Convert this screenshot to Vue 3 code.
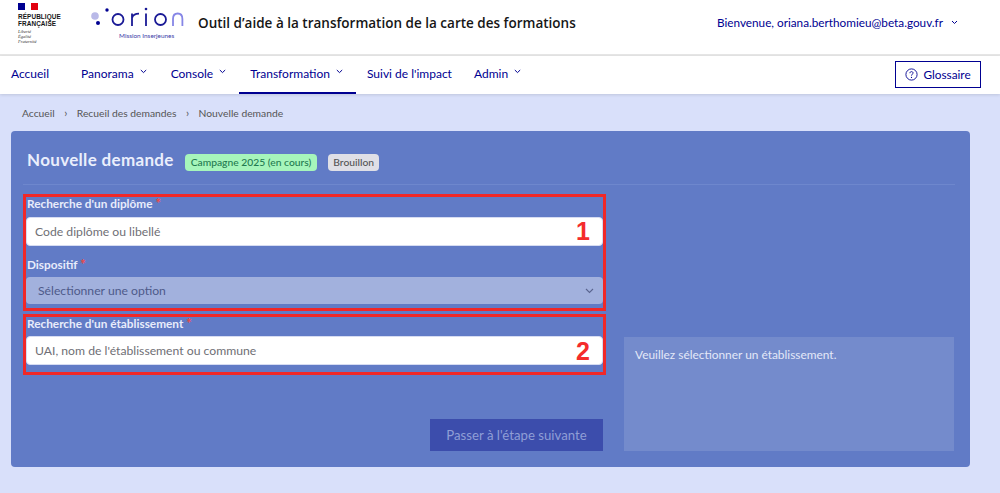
<script setup>
const navItems = [
  { label: 'Accueil' },
  { label: 'Panorama', chevron: true },
  { label: 'Console', chevron: true },
  { label: 'Transformation', chevron: true, active: true },
  { label: "Suivi de l'impact" },
  { label: 'Admin', chevron: true },
]
</script>

<template>
  <div class="page">
    <header class="top">
      <div class="rf">
        <div class="flag"><i class="b"></i><i class="w"></i><i class="r"></i></div>
        <div class="rf-name">RÉPUBLIQUE<br />FRANÇAISE</div>
        <div class="rf-motto">Liberté<br />Égalité<br />Fraternité</div>
      </div>
      <div class="orion">
        <svg class="orion-mark" width="104" height="28" viewBox="0 0 104 28">
          <circle cx="5" cy="9" r="3.800" fill="#b9b9e8" />
          <circle cx="8" cy="16" r="2" fill="#000091" />
          <circle cx="17" cy="3" r="1.700" fill="#000091" />
          <circle cx="28" cy="12.500" r="5.500" fill="none" stroke="#1a1a96" stroke-width="1.800" />
          <path d="M42 19V6.500M42 11c.8-2.800 3-4.300 7-4.300" fill="none" stroke="#1a1a96" stroke-width="1.800" />
          <path d="M56 19V6.500" fill="none" stroke="#1a1a96" stroke-width="1.800" />
          <circle cx="56" cy="2" r="1.300" fill="#1a1a96" />
          <circle cx="70.500" cy="12.500" r="5.500" fill="none" stroke="#1a1a96" stroke-width="1.800" />
          <path d="M83 19v-7c0-3.500 2-5.500 4.700-5.500s4.700 2 4.700 5.500v7" fill="none" stroke="#8686e6" stroke-width="1.800" />
        </svg>
        <div class="orion-sub">Mission Inserjeunes</div>
      </div>
      <div class="app-title">Outil d’aide à la transformation de la carte des formations</div>
      <div class="user">
        <span>Bienvenue, oriana.berthomieu@beta.gouv.fr</span>
        <svg width="7" height="5" viewBox="0 0 7 5"><path d="M1 1l2.500 2.500L6 1" fill="none" stroke="#000091" stroke-width="1" /></svg>
      </div>
    </header>

    <nav class="nav">
      <a
        v-for="item in navItems"
        :key="item.label"
        class="nav-item"
        :class="{ active: item.active }"
      >
        {{ item.label }}
        <svg v-if="item.chevron" width="7" height="5" viewBox="0 0 7 5"><path d="M.8 1l2.700 2.600L6.200 1" fill="none" stroke="#000091" stroke-width="1" /></svg>
      </a>
      <button class="glossaire">
        <svg width="13" height="13" viewBox="0 0 13 13">
          <circle cx="6.500" cy="6.500" r="5.600" fill="none" stroke="#000091" stroke-width=".9" />
          <path d="M4.900 5.200c0-1 .7-1.600 1.600-1.600s1.600.6 1.600 1.400c0 1.200-1.600 1.200-1.600 2.600" fill="none" stroke="#000091" stroke-width=".9" />
          <circle cx="6.500" cy="9.400" r=".6" fill="#000091" />
        </svg>
        Glossaire
      </button>
    </nav>

    <main class="main">
      <div class="crumbs">
        <span>Accueil</span><b>›</b><span>Recueil des demandes</span><b>›</b><span>Nouvelle demande</span>
      </div>

      <section class="card">
        <div class="card-head">
          <h1>Nouvelle demande</h1>
          <span class="tag green">Campagne 2025 (en cours)</span>
          <span class="tag grey">Brouillon</span>
        </div>

        <div class="grid">
          <div class="left">
            <div class="annot first">
              <label class="lbl">Recherche d'un diplôme <em>*</em></label>
              <div class="input">Code diplôme ou libellé</div>
              <label class="lbl second">Dispositif <em>*</em></label>
              <div class="select">
                <span>Sélectionner une option</span>
                <svg width="9" height="6" viewBox="0 0 9 6"><path d="M1 1l3.500 3.500L8 1" fill="none" stroke="#5a658f" stroke-width="1.100" /></svg>
              </div>
              <span class="num">1</span>
            </div>
            <div class="annot two">
              <label class="lbl">Recherche d'un établissement <em>*</em></label>
              <div class="input">UAI, nom de l'établissement ou commune</div>
              <span class="num">2</span>
            </div>
            <div class="actions">
              <button class="next">Passer à l'étape suivante</button>
            </div>
          </div>
          <aside class="info">Veuillez sélectionner un établissement.</aside>
        </div>
      </section>
    </main>
  </div>
</template>

<style>
html, body { margin: 0; background: #d9e0fa; }
</style>

<style scoped>
.page {
  width: 1000px;
  height: 493px;
  overflow: hidden;
  background: #d9e0fa;
  font-family: Lato, "Noto Sans", sans-serif;
}
.top {
  height: 54px;
  background: #fff;
  border-bottom: 2px solid #e6e6e6;
  display: flex;
  align-items: flex-start;
}
.rf { margin-left: 18px; width: 70px; padding-top: 3px; }
.flag { display: flex; width: 20px; height: 7px; }
.flag i { flex: 1; }
.flag .b { background: #000091; }
.flag .w { background: #fff; }
.flag .r { background: #e1000f; }
.rf-name {
  font-size: 6.400px;
  line-height: 7px;
  font-weight: 700;
  color: #161616;
  margin-top: 3px;
  font-family: "Liberation Sans", sans-serif;
  letter-spacing: .1px;
}
.rf-motto {
  font-family: "Liberation Serif", serif;
  font-style: italic;
  font-size: 4.500px;
  line-height: 5px;
  color: #333;
  margin-top: 2px;
}
.orion { width: 108px; margin-left: 2px; padding-top: 7px; }
.orion-mark { display: block; }
.orion-sub {
  font-size: 6.400px;
  line-height: 7px;
  color: #3a3aa8;
  margin-top: -3px;
  margin-left: 29px;
  white-space: nowrap;
}
.app-title {
  font-family: "Open Sans", sans-serif;
  font-size: 13.500px;
  font-weight: 600;
  line-height: 20px;
  color: #161616;
  padding-top: 13px;
}
.user {
  margin-left: auto;
  margin-right: 42px;
  padding-top: 14px;
  font-size: 11.750px;
  line-height: 17px;
  color: #000091;
  display: flex;
  align-items: center;
  gap: 8px;
}
.nav {
  height: 38px;
  background: #fff;
  display: flex;
  align-items: stretch;
  box-shadow: 0 1px 3px rgba(0, 0, 0, .12);
  position: relative;
  padding-left: 1px;
  font-size: 12px;
  color: #000091;
}
.nav-item {
  display: flex;
  align-items: center;
  gap: 6px;
  padding: 0 10px 2px;
  color: #000091;
  box-sizing: border-box;
  border-bottom: 2px solid transparent;
  height: 38px;
  white-space: nowrap;
}
.nav-item svg { margin-top: -4px; }
.nav-item.active { border-bottom-color: #000091; padding: 0 13px 2px 11px; margin-right: 1px; }
.nav-item:nth-child(1) { margin-right: 12px; }
.nav-item:nth-child(2) { margin-right: 4px; }
.nav-item:nth-child(3) { margin-right: 3px; }
.nav-item:nth-child(5) { margin-right: 2px; }
.glossaire {
  margin: 5px 19px 6px auto;
  width: 86px;
  height: 27px;
  border: 1px solid #000091;
  background: #fff;
  color: #000091;
  font: inherit;
  font-size: 11.800px;
  display: flex;
  align-items: center;
  justify-content: center;
  gap: 5px;
  padding: 0;
}
.main { padding: 0 30px 0 11px; }
.crumbs {
  height: 37px;
  padding-left: 11px;
  display: flex;
  align-items: center;
  font-size: 10.300px;
  color: #555;
}
.crumbs b { font-weight: 400; margin: 0 9.500px; font-size: 11px; }
.card {
  height: 336px;
  box-sizing: border-box;
  background: #617bc6;
  border-radius: 4px;
  padding: 0 15px 0 12px;
}
.card-head {
  height: 54px;
  display: flex;
  align-items: center;
  border-bottom: 1px solid #6e87cd;
  padding: 4px 0 0 4px;
  box-sizing: border-box;
  gap: 11px;
}
h1 {
  margin: 0;
  font-size: 17px;
  font-weight: 700;
  color: #eaeefc;
  letter-spacing: .32px;
}
.tag {
  font-size: 10.300px;
  font-weight: 500;
  height: 17px;
  line-height: 17px;
  padding: 0 5px;
  border-radius: 4px;
  margin-top: 5px;
}
.tag.green { background: #a6f5bb; color: #1f7a50; padding: 0 6px; }
.tag.grey { background: #dfdfe6; color: #555; }
.grid {
  display: grid;
  grid-template-columns: 583px 330px;
  column-gap: 18px;
  padding-top: 9px;
}
.annot {
  border: 3px solid #f02828;
  box-sizing: border-box;
  position: relative;
}
.annot.first { height: 117px; }
.annot.two { height: 61px; margin-top: 3px; }
.lbl {
  display: block;
  font-size: 11.800px;
  font-weight: 700;
  color: #e8ecfb;
  line-height: 14px;
  height: 20px;
  padding-left: 1px;
  box-sizing: border-box;
}
.annot.two .lbl { height: 19px; }
.lbl em { color: #ea4a4a; font-style: normal; font-weight: 900; font-size: 13px; line-height: 0; }
.lbl.second { margin-top: 12px; height: 19px; }
.input {
  height: 29px;
  background: #fff;
  border-radius: 4px;
  border: 1px solid #d6dcf2;
  box-sizing: border-box;
  font-size: 12.200px;
  line-height: 27px;
  padding-left: 8px;
  color: #6f6f75;
}
.select {
  height: 27px;
  background: #a2b1dd;
  border-radius: 4px;
  display: flex;
  align-items: center;
  justify-content: space-between;
  padding: 0 9px 0 12px;
  font-size: 12.200px;
  color: #4e5a8a;
}
.num {
  position: absolute;
  right: 13px;
  top: 20px;
  font-family: "Liberation Sans", sans-serif;
  font-weight: 700;
  font-size: 25px;
  line-height: 28px;
  color: #f42c2c;
}
.actions { display: flex; justify-content: flex-end; margin-top: 44px; padding-right: 3px; }
.next {
  width: 173px;
  height: 32px;
  background: #3c4dac;
  border: 0;
  color: #8f9ed6;
  font: inherit;
  font-size: 13.200px;
  padding: 0;
}
.info {
  margin-top: 143px;
  height: 114px;
  box-sizing: border-box;
  background: #748bcc;
  color: #e3e8f8;
  font-size: 11.900px;
  line-height: 14px;
  padding: 11px;
}
</style>
